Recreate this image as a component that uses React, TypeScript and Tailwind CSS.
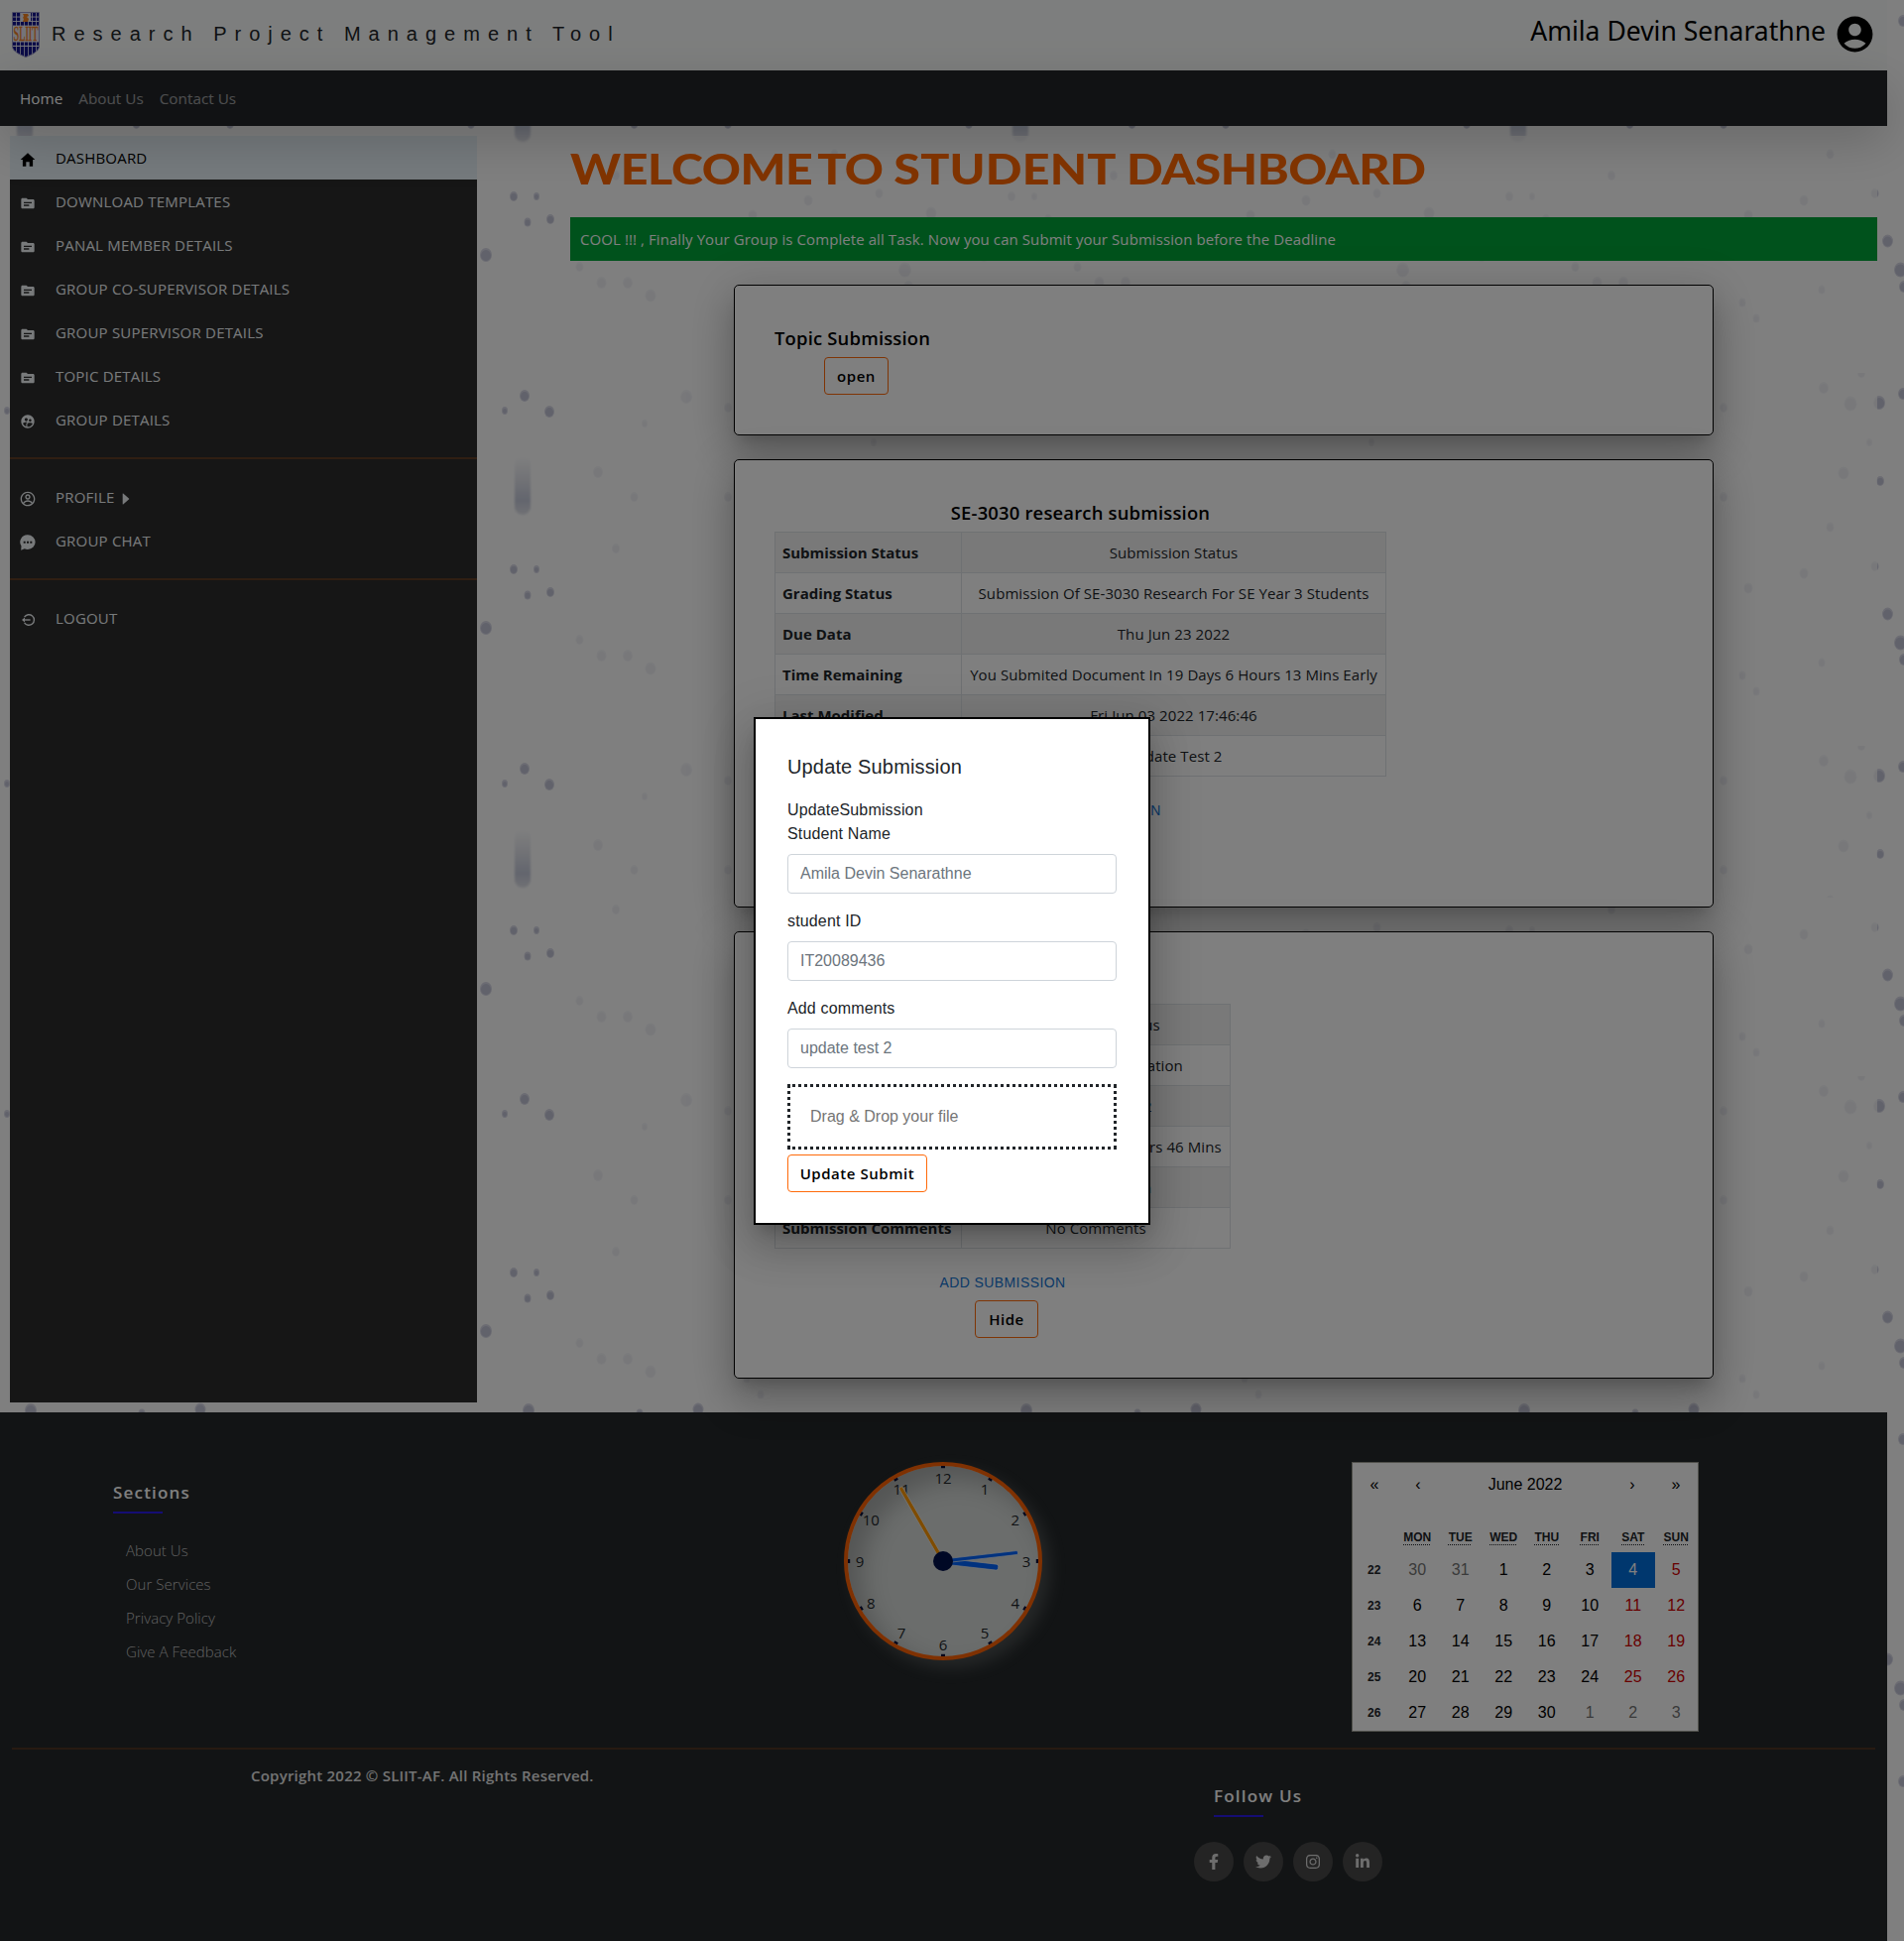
import type { ReactNode } from "react";
import { MdAccountCircle, MdSource, MdSupervisedUserCircle } from "react-icons/md";
import { IoMdHome } from "react-icons/io";
import { CgProfile } from "react-icons/cg";
import { AiFillCaretRight } from "react-icons/ai";
import { FaFacebookF, FaTwitter, FaInstagram, FaLinkedinIn } from "react-icons/fa";

/* [x, y, radius] of every drop inside one 502px wide tile */
const drops: number[][] = [
  [16, 198, 4], [39, 198, 3], [30, 224, 3.5], [53, 221, 4], [490, 257, 6], [27, 23, 5], [7, 38, 3], [52, 39, 5],
  [119, 177, 4], [313, 202, 4.5], [384.5, 195, 4], [257, 217, 4.5], [437, 215, 5.5], [82.5, 269, 4], [104.5, 285, 5],
  [131, 285, 5], [154, 298, 5.5], [190, 24, 6], [148, 51, 3], [410.5, 272, 6.5], [101, 100, 5], [379, 70, 3],
  [232, 35, 4], [414, 289, 5], [339.5, 155.5, 4], [397.5, 243, 5.5], [331, 292, 3.5], [251, 305, 3.5], [265, 321, 3.5],
  [333, 15, 5], [360, 31, 6.5], [389, 30, 6], [413, 21, 5], [371, 0, 4], [353, 101, 5.5], [390, 109, 4],
  [232, 125, 4], [137.5, 125, 4], [475, 125, 4],
];

const columns = [0, 502, 1004, 1506];

function Drop({ x, y, r }: { x: number; y: number; r: number }) {
  return (
    <g>
      <ellipse cx={x} cy={y} rx={r} ry={r + 1} fill="#d8d9e6" />
      <ellipse cx={x} cy={y + 0.5} rx={r - 1} ry={r - 0.6} fill="#c3c4d6" />
    </g>
  );
}

function Backdrop() {
  return (
    <svg className="absolute inset-0 h-full w-full" aria-hidden="true">
      <defs>
        <linearGradient id="drip" x1="0" y1="0" x2="0" y2="1">
          <stop offset="0" stopColor="#d0d3e0" stopOpacity="0" />
          <stop offset="0.4" stopColor="#d0d3e0" stopOpacity="0.6" />
          <stop offset="0.75" stopColor="#c6cbdc" />
          <stop offset="1" stopColor="#e2e3ea" />
        </linearGradient>
        <filter id="soft" x="-30%" y="-10%" width="160%" height="120%">
          <feGaussianBlur stdDeviation="1.2" />
        </filter>
        <pattern id="upper" width="502" height="376" patternUnits="userSpaceOnUse">
          {drops.map(([x, y, r], i) => (
            <Drop key={i} x={x} y={y} r={r} />
          ))}
        </pattern>
        <pattern id="lower" y="740" width="502" height="345" patternUnits="userSpaceOnUse">
          {drops.map(([x, y, r], i) => (
            <Drop key={i} x={x} y={y} r={r} />
          ))}
        </pattern>
      </defs>
      <rect width="100%" height="905" fill="url(#upper)" />
      <rect y="905" width="100%" height="1052" fill="url(#lower)" />
      {columns.map((c) => (
        <g key={c}>
          {[84, 460, 836].map((y) => (
            <rect key={y} x={c + 17} y={y} width="16" height="59" rx="8" fill="url(#drip)" filter="url(#soft)" />
          ))}
          <Drop x={c + 31} y={1422} r={6} />
          <Drop x={c + 143} y={1425} r={3.5} />
          <Drop x={c + 202} y={1421} r={5.5} />
        </g>
      ))}
    </svg>
  );
}

function Logo() {
  const cols = [1, 5, 9, 13, 17, 21, 25];
  const rows = [1, 5.5, 10];
  return (
    <svg className="h-[46px] w-7 overflow-visible" viewBox="0 0 28 46" aria-label="SLIIT">
      <defs>
        <clipPath id="shield">
          <path d="M0.5 0.5H27.5V35C27 40 20 43 14 45.5C8 43 1 40 0.5 35Z" />
        </clipPath>
      </defs>
      <g clipPath="url(#shield)">
        <rect width="28" height="46" fill="#e9e9f2" />
        {rows.map((y) => cols.map((x) => <rect key={`${x}-${y}`} x={x} y={y} width="3.2" height="3.6" fill="#15158f" />))}
        <rect x="9" y="1" width="10" height="9" fill="#e9e9f2" />
        <path d="M11 2h5l1 2-2 1 2 2-1 3h-5l1-3-1-1 1-2z" fill="#f58220" />
        {cols.map((x) => (
          <g key={x} fill="#15158f">
            <rect x={x} y="30.5" width="3.2" height="3.4" />
            <rect x={x} y="35" width="3.2" height="11" />
          </g>
        ))}
      </g>
      <text x="1.5" y="29" fontSize="20" fontFamily="Liberation Serif, serif" fill="#f07d1e" stroke="#f07d1e" strokeWidth="0.5" textLength="25" lengthAdjust="spacingAndGlyphs">
        SLIIT
      </text>
      <path d="M0.5 0.5H27.5V35C27 40 20 43 14 45.5C8 43 1 40 0.5 35Z" fill="none" stroke="#9a9ac8" />
    </svg>
  );
}

function ChatIcon() {
  return (
    <svg className="h-4 w-4" viewBox="0 0 16 16" fill="currentColor" aria-hidden="true">
      <path
        fillRule="evenodd"
        d="M8 0.3a7.6 7.3 0 1 1 0 14.6a8 8 0 0 1-3.3-0.7L1.2 15.8L1.5 11.6A7.3 7.3 0 0 1 8 0.3ZM3.7 6.7v2h2v-2zM7 6.7v2h2v-2zM10.3 6.7v2h2v-2z"
      />
    </svg>
  );
}

function LogoutIcon() {
  return (
    <svg className="h-4 w-4" viewBox="0 0 16 16" fill="none" stroke="currentColor" strokeWidth="1.4" aria-hidden="true">
      <path d="M4.6 5.2A5.3 5.3 0 1 1 4.6 10.8" />
      <path d="M10.6 8H3" />
      <path d="M5 5.6L2 8L5 10.4Z" fill="currentColor" stroke="none" />
    </svg>
  );
}

function MenuItem({ icon, label, active, caret }: { icon: ReactNode; label: string; active?: boolean; caret?: boolean }) {
  return (
    <li
      className={
        active
          ? "flex h-11 items-center bg-[#ebf5fb] pl-[9px] text-[15px] tracking-[0.2px] text-black"
          : "flex h-11 items-center pl-[9px] text-[15px] tracking-[0.2px] text-[#f0f4f7]"
      }
    >
      <span className="mt-[3px] flex w-[18px] justify-center">{icon}</span>
      <span className="ml-[19px]">{label}</span>
      {caret && <AiFillCaretRight className="mt-[3px] ml-1 h-4 w-4" />}
    </li>
  );
}

function Button({ children, className }: { children: ReactNode; className: string }) {
  return (
    <button
      className={
        "h-[38px] rounded-[4px] border border-[#ff6a0a] pt-px text-center font-['Open_Sans',sans-serif] text-[15px] font-semibold tracking-[0.55px] text-black " +
        className
      }
    >
      {children}
    </button>
  );
}

function Card({ children, className }: { children: ReactNode; className: string }) {
  return (
    <section
      className={
        "flex w-[988px] flex-col items-start rounded-[5px] border border-black bg-white p-10 shadow-[0_11px_15px_-7px_rgba(0,0,0,0.2),0_24px_38px_3px_rgba(0,0,0,0.14),0_9px_46px_8px_rgba(0,0,0,0.12)] " +
        className
      }
    >
      {children}
    </section>
  );
}

function CardTitle({ children }: { children: ReactNode }) {
  return <h2 className="mb-1.5 text-[18.4px] leading-[26px] font-semibold tracking-[0.2px] text-black">{children}</h2>;
}

function Details({ rows, className }: { rows: string[][]; className: string }) {
  return (
    <table className={"table-fixed border-collapse text-[15px] text-[#212529] " + className}>
      <tbody>
        {rows.map(([k, v]) => (
          <tr key={k} className="h-[41px] odd:bg-black/5">
            <th className="w-[188px] border border-[#dee2e6] px-[7px] py-0 text-left font-bold whitespace-nowrap">{k}</th>
            <td className="border border-[#dee2e6] p-0 text-center tracking-[0.08px] whitespace-nowrap">{v}</td>
          </tr>
        ))}
      </tbody>
    </table>
  );
}

const research = [
  ["Submission Status", "Submission Status"],
  ["Grading Status", "Submission Of SE-3030 Research For SE Year 3 Students"],
  ["Due Data", "Thu Jun 23 2022"],
  ["Time Remaining", "You Submited Document In 19 Days 6 Hours 13 Mins Early"],
  ["Last Modified", "Fri Jun 03 2022 17:46:46"],
  ["Submission Comments", "Update Test 2"],
];
const presentation = [
  ["Submission Status", "Submission Status"],
  ["Grading Status", "Submission Presentation"],
  ["Due Data", "Thu Jun 23 2022"],
  ["Time Remaining", "You Have 18 Days 20 Hours 46 Mins"],
  ["Last Modified", "No Modification"],
  ["Submission Comments", "No Comments"],
];

function Clock() {
  const hours = [1, 2, 3, 4, 5, 6, 7, 8, 9, 10, 11, 12];
  return (
    <div className="h-[200px] w-[200px] rounded-full border-4 border-[#ff6205] bg-[#d6dad8] shadow-[8px_8px_16px_rgba(214,218,216,0.22),inset_14px_14px_24px_rgba(0,0,0,0.22)]">
      <svg viewBox="-96 -96 192 192" className="h-full w-full">
        {hours.map((h) => {
          const a = (h * Math.PI) / 6;
          return (
            <g key={h}>
              <rect x="-2" y="-96" width="4" height="2.2" fill="#000a35" transform={`rotate(${h * 30})`} />
              <text x={84 * Math.sin(a)} y={-84 * Math.cos(a) + 5.5} textAnchor="middle" fontSize="15" fontFamily="Open Sans, sans-serif" fill="#212529">
                {h}
              </text>
            </g>
          );
        })}
        <g strokeLinejoin="round">
          <rect x="-3" y="-56" width="6" height="56" rx="2" fill="#0064ff" stroke="#eeeeee" strokeWidth="0.7" transform="rotate(96.5)" />
          <rect x="-2" y="-76" width="4" height="76" rx="1.5" fill="#0064ff" stroke="#eeeeee" strokeWidth="0.7" transform="rotate(83.5)" />
          <rect x="-2" y="-86" width="4" height="86" rx="1.5" fill="#ff9800" stroke="#eeeeee" strokeWidth="0.7" transform="rotate(-30)" />
          <circle r="10" fill="#00104a" />
        </g>
      </svg>
    </div>
  );
}

const weeks: [number, number[]][] = [
  [22, [30, 31, 1, 2, 3, 4, 5]],
  [23, [6, 7, 8, 9, 10, 11, 12]],
  [24, [13, 14, 15, 16, 17, 18, 19]],
  [25, [20, 21, 22, 23, 24, 25, 26]],
  [26, [27, 28, 29, 30, 1, 2, 3]],
];

function dayColor(week: number, i: number, d: number) {
  if ((week === 22 && d > 20) || (week === 26 && d < 20)) return "text-[#757575]";
  if (d === 4) return "bg-[#006edc] text-white";
  return i > 4 ? "text-[#d10000]" : "text-black";
}

function Calendar() {
  return (
    <div className="h-[272px] w-[350px] border border-[#a0a096] bg-white font-['Liberation_Sans',Arial,sans-serif] text-black">
      <div className="mb-4 grid h-11 grid-cols-[44px_44px_1fr_44px_44px] items-center text-center text-base">
        <span>«</span>
        <span>‹</span>
        <span>June 2022</span>
        <span>›</span>
        <span>»</span>
      </div>
      <div className="grid grid-cols-8 text-center">
        <span className="h-[30px]" />
        {["MON", "TUE", "WED", "THU", "FRI", "SAT", "SUN"].map((d) => (
          <span key={d} className="pt-[7px] text-xs font-bold text-[#212529] underline decoration-dotted decoration-1 underline-offset-[3px]">
            {d}
          </span>
        ))}
        {weeks.map(([w, days]) => [
          <span key={w} className="flex h-9 items-center justify-center text-xs font-bold text-[#212529]">
            {w}
          </span>,
          ...days.map((d, i) => (
            <span key={`${w}-${i}`} className={"flex h-9 items-center justify-center pb-px text-base " + dayColor(w, i, d)}>
              {d}
            </span>
          )),
        ])}
      </div>
    </div>
  );
}

function FooterTitle({ children }: { children: ReactNode }) {
  return (
    <div>
      <h3 className="text-[17px] leading-6 font-semibold tracking-[1.2px] text-white">{children}</h3>
      <div className="mt-[7px] h-[2px] w-[50px] bg-[#2a1be8]" />
    </div>
  );
}

function Field({ label, value }: { label: string; value: string }) {
  return (
    <label className="block">
      <span className="block h-6 leading-6">{label}</span>
      <input
        readOnly
        placeholder={value}
        className="mt-2 mb-4 block h-10 w-full rounded-[4px] border border-[#ced4da] px-3 text-base tracking-normal placeholder:text-[#6c757d]"
      />
    </label>
  );
}

function Modal() {
  return (
    <div className="absolute inset-0 flex items-center justify-center bg-black/50">
      <div className="h-[512px] w-[400px] border-2 border-black bg-white px-8 pt-8 font-['Liberation_Sans',Arial,sans-serif] text-base tracking-[0.15px] text-[#212529] shadow-[0_11px_15px_-7px_rgba(0,0,0,0.2),0_24px_38px_3px_rgba(0,0,0,0.14),0_9px_46px_8px_rgba(0,0,0,0.12)]">
        <h2 className="h-8 text-xl leading-8">Update Submission</h2>
        <p className="mt-4 h-6 leading-6">UpdateSubmission</p>
        <Field label="Student Name" value="Amila Devin Senarathne" />
        <Field label="student ID" value="IT20089436" />
        <Field label="Add comments" value="update test 2" />
        <div className="flex h-[66px] items-center border-[3px] border-dotted border-[#212529] pl-5 tracking-normal text-[#757575]">
          Drag &amp; Drop your file
        </div>
        <Button className="mt-[5px] w-[141px]">Update Submit</Button>
      </div>
    </div>
  );
}

export default function App() {
  const folder = <MdSource className="h-4 w-4" />;
  return (
    <div className="relative h-[1957px] w-full overflow-hidden bg-white font-['Open_Sans','Noto_Sans',sans-serif]">
      <Backdrop />
      <div className="relative w-[1903px]">
        <header className="flex h-[71px] items-start justify-between bg-[#fbfdfc] pr-[11px] pl-3">
          <div className="flex pt-3">
            <Logo />
            <h1 className="ml-3 pt-2 font-['Liberation_Sans',Arial,sans-serif] text-xl leading-7 tracking-[8px] whitespace-nowrap text-[#212529]">
              Research Project Management Tool
            </h1>
          </div>
          <div className="flex items-center pt-[13px]">
            <span className="mt-[-7px] font-['Noto_Sans',sans-serif] text-[26.5px] leading-9 whitespace-nowrap text-black">Amila Devin Senarathne</span>
            <MdAccountCircle className="ml-2 h-[43px] w-[43px] text-black" />
          </div>
        </header>
        <nav className="relative flex h-14 items-center gap-4 bg-[#222529] px-5 text-[15.3px] text-white/55 shadow-[0_16px_48px_rgba(0,0,0,0.175)]">
          <a className="text-white">Home</a>
          <a>About Us</a>
          <a>Contact Us</a>
        </nav>

        <div className="flex justify-between p-[10px]">
          <aside className="h-[1277px] w-[471px] bg-[#2c2c2c]">
            <ul>
              <MenuItem active icon={<IoMdHome className="h-[18px] w-[18px]" />} label="DASHBOARD" />
              <MenuItem icon={folder} label="DOWNLOAD TEMPLATES" />
              <MenuItem icon={folder} label="PANAL MEMBER DETAILS" />
              <MenuItem icon={folder} label="GROUP CO-SUPERVISOR DETAILS" />
              <MenuItem icon={folder} label="GROUP SUPERVISOR DETAILS" />
              <MenuItem icon={folder} label="TOPIC DETAILS" />
              <MenuItem icon={<MdSupervisedUserCircle className="h-4 w-4" />} label="GROUP DETAILS" />
            </ul>
            <hr className="my-4 h-[2px] border-0 bg-[#ff6a0a]/25" />
            <ul>
              <MenuItem caret icon={<CgProfile className="h-4 w-4" />} label="PROFILE" />
              <MenuItem icon={<ChatIcon />} label="GROUP CHAT" />
            </ul>
            <hr className="my-4 h-[2px] border-0 bg-[#ff6a0a]/25" />
            <ul>
              <MenuItem icon={<LogoutIcon />} label="LOGOUT" />
            </ul>
          </aside>

          <main className="flex h-[1277px] w-[1318px] flex-col items-center bg-white/75">
            <h1 className="flex h-[82px] origin-left scale-x-[1.15] self-start pt-[7px] font-['Lato',sans-serif] text-[42px] leading-[52px] font-black whitespace-pre text-[#ff6600]">
              <span className="tracking-[-0.3px]">WELCOME</span>
              <span className="-ml-1 tracking-[-0.5px]"> TO </span>
              <span className="tracking-[0.2px]">STUDENT </span>
              <span className="tracking-[-0.4px]">DASHBOARD</span>
            </h1>
            <p className="mb-6 flex h-11 w-full items-center bg-[#00a438] px-[10px] text-[15px] tracking-[0.08px] text-white">
              COOL !!! , Finally Your Group is Complete all Task. Now you can Submit your Submission before the Deadline
            </p>
            <Card className="mb-6 h-[152px]">
              <CardTitle>Topic Submission</CardTitle>
              <Button className="ml-[50px] w-[65px]">open</Button>
            </Card>
            <Card className="mb-6 h-[452px]">
              <div className="flex flex-col items-center">
                <CardTitle>SE-3030 research submission</CardTitle>
                <Details className="w-[617px]" rows={research} />
                <a className="mt-[22px] ml-2 h-6 font-['Liberation_Sans',Arial,sans-serif] text-sm leading-6 tracking-[0.4px] text-[#1976d2]">
                  UPDATE SUBMISSION
                </a>
                <Button className="mt-1.5 ml-2 w-16">Hide</Button>
              </div>
            </Card>
            <Card className="h-[451px]">
              <div className="flex flex-col items-center">
                <CardTitle>Presentation submission</CardTitle>
                <Details className="w-[460px]" rows={presentation} />
                <a className="mt-[22px] h-6 font-['Liberation_Sans',Arial,sans-serif] text-sm leading-6 tracking-[0.4px] text-[#1976d2]">ADD SUBMISSION</a>
                <Button className="mt-1.5 ml-2 w-16">Hide</Button>
              </div>
            </Card>
          </main>
        </div>

        <footer className="h-[533px] bg-[#24282a] px-3 pt-[50px]">
          <div className="flex h-[288px] items-start">
            <div className="w-[736px] pt-[19px] pl-[102px]">
              <FooterTitle>Sections</FooterTitle>
              <ul className="mt-5 ml-[13px] text-[15px] leading-[34px] font-light tracking-[0.06px] text-[#c2c2c2]">
                <li>About Us</li>
                <li>Our Services</li>
                <li>Privacy Policy</li>
                <li>Give A Feedback</li>
              </ul>
            </div>
            <div className="ml-[103px] w-[512px]">
              <Clock />
            </div>
            <Calendar />
          </div>
          <hr className="h-[2px] border-0 bg-[#ff6a0a]/20" />
          <div className="flex">
            <p className="w-[950px] pt-[14px] pl-[241px] text-[15px] leading-6 font-semibold tracking-[0.22px] whitespace-nowrap text-[#e6e6e6]">
              Copyright 2022 © SLIIT-AF. All Rights Reserved.
            </p>
            <div className="pt-[35px] pl-[242px]">
              <div className="pl-5">
                <FooterTitle>Follow Us</FooterTitle>
              </div>
              <div className="mt-[25px] flex gap-[10px] text-white/80">
                {[FaFacebookF, FaTwitter, FaInstagram, FaLinkedinIn].map((Icon, i) => (
                  <span key={i} className="flex h-10 w-10 items-center justify-center rounded-full bg-[#484848]">
                    <Icon className="h-4 w-4" />
                  </span>
                ))}
              </div>
            </div>
          </div>
        </footer>
      </div>
      <Modal />
    </div>
  );
}
